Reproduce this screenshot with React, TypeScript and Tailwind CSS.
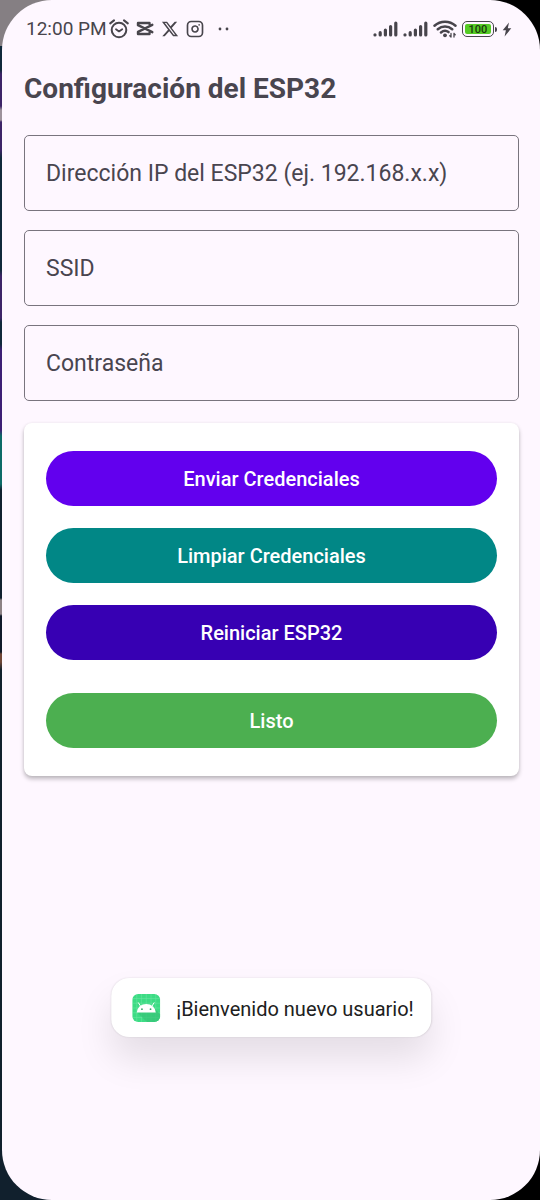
import { useId, useState } from 'react';
import { FaXTwitter } from 'react-icons/fa6';
import { Instagram } from 'lucide-react';

function AlarmIcon() {
  return (
    <svg width="20" height="20" viewBox="0 0 20 20" fill="none" stroke="currentColor" strokeWidth="2" strokeLinecap="round" strokeLinejoin="round" aria-hidden="true">
      <circle cx="10" cy="11" r="7.3" />
      <path d="M1.2 4.4 5 1.4M18.8 4.4 15 1.4" />
      <path d="m7 10.2 3 2.2 3.2-2.2" strokeWidth="1.8" />
    </svg>
  );
}

function CutIcon() {
  return (
    <svg width="18" height="16" viewBox="0 0 18 16" fill="none" stroke="currentColor" strokeWidth="2.4" strokeLinejoin="round" strokeLinecap="round" aria-hidden="true">
      <path d="M16.300 3.800 2 10.800V13H13.500V12M16.300 11.200 2 4.200V2H13.500V3" />
    </svg>
  );
}

function SignalIcon() {
  return (
    <svg width="25" height="16" viewBox="0 0 25 16" stroke="currentColor" strokeWidth="3.2" strokeLinecap="round" aria-hidden="true">
      <path d="M2 13.900v-.1M7.200 13.900v-2.200M12.400 13.900V9.200M17.600 13.900V5.500M22.800 13.900V2" />
    </svg>
  );
}

function WifiIcon() {
  return (
    <svg width="24" height="18" viewBox="0 0 24 18" fill="none" stroke="currentColor" strokeWidth="2.500" strokeLinecap="round" aria-hidden="true">
      <path d="M1.500 5.700C7.500.3 16.500.3 22.500 5.700M4.800 9.300c4.200-3.700 10.200-3.700 14.400 0M8 12.500c2.400-2 5.400-2 7.500-.4" />
      <circle cx="12" cy="15.300" r="1.900" fill="currentColor" stroke="none" />
      <path d="M18 13.500v3.500m-1.200-1.200 1.200 1.300M21 17v-3.500m1.200 1.200L21 13.400" strokeWidth="1.300" />
    </svg>
  );
}

function BoltIcon() {
  return (
    <svg width="10" height="15" viewBox="0 0 10 15" fill="currentColor" aria-hidden="true">
      <path d="M7 .5.700 8.200h3.200L2.600 14.500 9.300 6.300H5.800L7 .5Z" />
    </svg>
  );
}

function Battery() {
  return (
    <div className="flex items-center gap-px">
      <div className="h-4 w-8 rounded-[5px] border border-[#48454c] p-[2px]">
        <div className="flex h-full items-center justify-center rounded-[2px] bg-[#55cb25] text-[11px] leading-none font-medium text-[#17380c]">
          100
        </div>
      </div>
      <div className="h-[5px] w-[2px] rounded-r bg-[#48454c]" />
    </div>
  );
}

function AndroidIcon() {
  return (
    <svg width="28" height="28" viewBox="0 0 28 28" className="shrink-0" aria-hidden="true">
      <rect width="28" height="28" rx="6" fill="#3ddc84" />
      <path d="M4.500 0v28M9.200 0v28M14 0v28M18.800 0v28M23.500 0v28M0 4.500h28M0 9.200h28M0 14h28M0 18.800h28M0 23.500h28" stroke="#8fedb9" strokeWidth=".5" opacity=".6" />
      <path d="M5 18.500 14.500 28H22a6 6 0 0 0 6-6v-1.500L20.500 12.500Z" fill="#35c477" opacity=".75" />
      <path d="M4.500 18.500a9.500 8.500 0 0 1 19 0Z" fill="#fff" />
      <path d="m8.200 12-2-3.200M19.800 12l2-3.200" stroke="#fff" strokeWidth="1" strokeLinecap="round" />
      <circle cx="9.700" cy="15.200" r=".9" fill="#3ba56b" />
      <circle cx="18.300" cy="15.200" r=".9" fill="#3ba56b" />
    </svg>
  );
}

function StatusBar() {
  return (
    <header className="flex h-5 items-center justify-between pr-[7px] pl-[2px] text-[#48454c]">
      <div className="flex items-center">
        <span className="text-[19px] leading-5">12:00 PM</span>
        <div className="ml-0.5 flex items-center gap-[7px]">
          <AlarmIcon />
          <CutIcon />
          <FaXTwitter size={18} aria-hidden="true" />
          <Instagram size={18} strokeWidth={2.2} aria-hidden="true" />
        </div>
        <svg width="12" height="4" viewBox="0 0 12 4" fill="currentColor" className="ml-3.5" aria-hidden="true">
          <circle cx="2" cy="2" r="1.400" />
          <circle cx="9" cy="2" r="1.400" />
        </svg>
      </div>
      <div className="flex items-center gap-[5px]">
        <SignalIcon />
        <SignalIcon />
        <WifiIcon />
        <Battery />
        <BoltIcon />
      </div>
    </header>
  );
}

function Field({ label, type = 'text' }: { label: string; type?: string }) {
  const id = useId();
  const [value, setValue] = useState('');
  return (
    <div className="grid items-center">
      <input
        id={id}
        type={type}
        value={value}
        onChange={(event) => setValue(event.target.value)}
        className="col-start-1 row-start-1 h-[76px] w-full rounded-[5px] border border-[#79747e] bg-transparent px-[21px] text-[23px] text-[#49454f] focus:outline-2 focus:outline-[#6200ee]"
      />
      <label
        htmlFor={id}
        className={`pointer-events-none col-start-1 row-start-1 justify-self-start pt-0.5 pl-[22px] text-[23px] leading-8 text-[#49454f] ${value ? 'invisible' : ''}`}
      >
        {label}
      </label>
    </div>
  );
}

const buttonBase = 'h-[55px] w-full rounded-full pt-px text-xl font-medium text-white';

export default function App() {
  return (
    <div className="min-h-screen bg-[linear-gradient(to_right,transparent_50%,#000_50%),linear-gradient(to_bottom,#857f83_0_46px,#10293b_46px_70px,#3d2468_74px_106px,#9d929c_110px_120px,#3d2468_122px_150px,#10293b_158px_270px,#3d2468_276px_318px,#10293b_322px_344px,#3d1f75_350px_430px,#0d6b68_436px_484px,#10202f_490px_598px,#8d8285_600px_614px,#101a2a_616px_652px,#704638_654px_662px,#11202d_670px)] font-[Roboto,sans-serif]">
      <div className="pl-[2px]">
        <div className="relative flex min-h-screen flex-col rounded-[50px] bg-[#fef7ff] pt-[19px] pr-[21px] pb-12 pl-[22px]">
          <StatusBar />
          <main>
            <h1 className="mt-8 text-[28px] leading-9 font-bold text-[#49454f]">Configuración del ESP32</h1>
            <form className="mt-7" onSubmit={(event) => event.preventDefault()}>
              <div className="flex flex-col gap-[19px]">
                <Field label="Dirección IP del ESP32 (ej. 192.168.x.x)" />
                <Field label="SSID" />
                <Field label="Contraseña" type="password" />
              </div>
              <div className="mt-[22px] flex flex-col gap-[22px] rounded-lg bg-white px-[22px] py-7 shadow-[0_3px_4px_rgba(0,0,0,0.25),0_0_3px_rgba(0,0,0,0.06)]">
                <button type="submit" className={`${buttonBase} bg-[#6200ee]`}>Enviar Credenciales</button>
                <button type="button" className={`${buttonBase} bg-[#018786]`}>Limpiar Credenciales</button>
                <button type="button" className={`${buttonBase} bg-[#3700b3]`}>Reiniciar ESP32</button>
                <button type="button" className={`${buttonBase} mt-[11px] bg-[#4caf50]`}>Listo</button>
              </div>
            </form>
          </main>
          <div
            role="status"
            className="absolute bottom-[163px] left-1/2 flex h-[59px] -translate-x-1/2 items-center gap-4 rounded-[18px] bg-white pr-[17px] pl-[21px] text-xl whitespace-nowrap text-[#202020] shadow-[0_22px_36px_rgba(0,0,0,0.1),0_0_2px_rgba(0,0,0,0.12)]"
          >
            <AndroidIcon />
            <span className="pt-0.5">¡Bienvenido nuevo usuario!</span>
          </div>
        </div>
      </div>
    </div>
  );
}
